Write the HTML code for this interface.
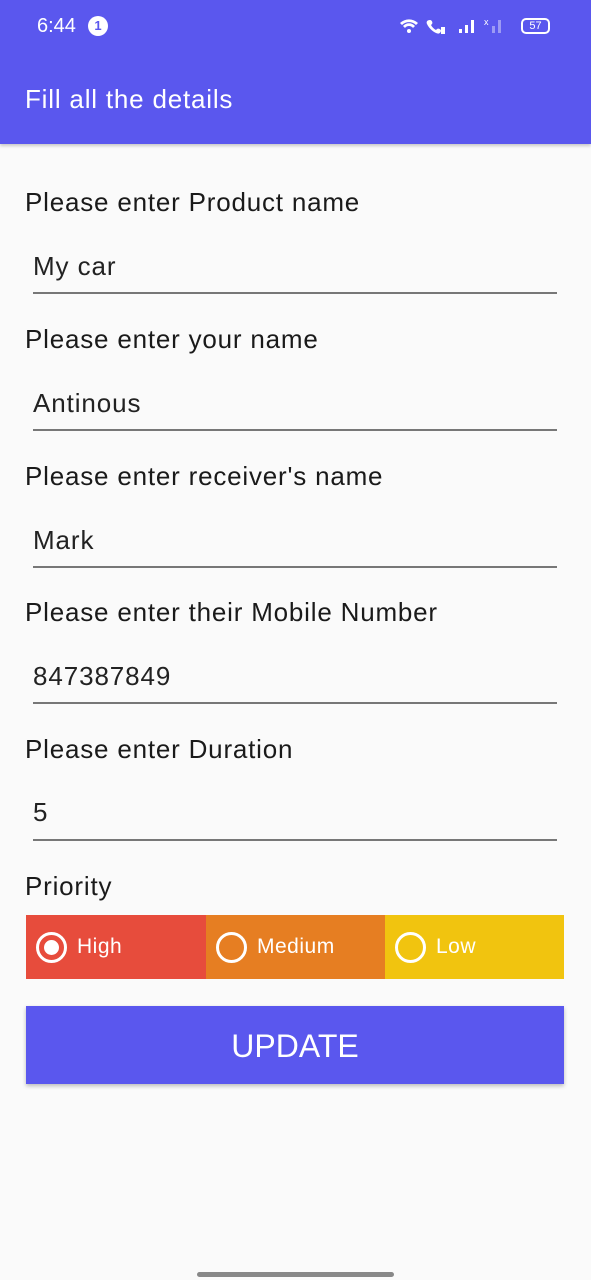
<!DOCTYPE html>
<html><head><meta charset="utf-8"><style>
*{margin:0;padding:0;box-sizing:border-box}
body{width:591px;height:1280px;background:#fafafa;font-family:"Liberation Sans",sans-serif;position:relative;overflow:hidden;color:#1a1a1a}
.bar{position:absolute;left:0;top:0;width:591px;height:144px;background:#5a57ee;box-shadow:0 2px 3px rgba(0,0,0,.2)}
.t{position:absolute;white-space:nowrap;line-height:1}
.lab{left:25px;font-size:26px;letter-spacing:0.8px;color:#1a1a1a}
.inp{left:33px;font-size:26px;letter-spacing:0.9px;color:#222}
.ul{position:absolute;left:33px;width:524px;height:1.5px;background:#777}
.seg{position:absolute;top:915px;height:64px;width:180px}
.rad{position:absolute;left:10px;top:17px;width:31px;height:31px;border:3px solid #fff;border-radius:50%}
.rl{position:absolute;left:51px;top:21px;color:#fff;font-size:21px;letter-spacing:0.5px}
</style></head><body>
<div class="bar">
<div class="t" style="left:37px;top:16px;font-size:20px;color:#fff">6:44</div>
<div style="position:absolute;left:88px;top:16px;width:20px;height:20px;border-radius:50%;background:#fff;color:#5a57ee;font-size:13px;font-weight:bold;text-align:center;line-height:20px">1</div>
<svg style="position:absolute;left:398px;top:14px" width="120" height="24" viewBox="0 0 120 24" fill="#fff">
<path d="M2 9a13 13 0 0 1 18 0l-2 2a10 10 0 0 0-14 0z M5 12a8 8 0 0 1 12 0l-2 2a5 5 0 0 0-8 0z"/><circle cx="11" cy="17" r="2"/>
<path d="M32 6c2 0 3 3 2 4l-1 1c1 2 3 4 5 5l1-1c1-1 4 0 4 2-1 3-3 3-5 2-4-2-7-5-9-9-1-2 0-4 3-4z"/><rect x="43" y="13" width="4" height="7"/>
<rect x="61" y="15" width="3" height="4"/><rect x="67" y="11" width="3" height="8"/><rect x="73" y="6" width="3" height="13"/>
<g opacity=".4"><rect x="94" y="12" width="3" height="7"/><rect x="100" y="6" width="3" height="13"/></g>
<text x="86" y="11" font-size="9" font-family="Liberation Sans">x</text>
</svg>
<div style="position:absolute;left:521px;top:18px;width:29px;height:16px;border:2px solid #fff;border-radius:5px;color:#fff;font-size:11px;text-align:center;line-height:12px">57</div>
<div class="t" style="left:25px;top:86px;font-size:26px;letter-spacing:0.8px;color:#fff">Fill all the details</div>
</div>
<div class="t lab" style="top:189px">Please enter Product name</div>
<div class="t inp" style="top:253px">My car</div>
<div class="ul" style="top:292px"></div>
<div class="t lab" style="top:326px">Please enter your name</div>
<div class="t inp" style="top:390px">Antinous</div>
<div class="ul" style="top:429px"></div>
<div class="t lab" style="top:463px">Please enter receiver's name</div>
<div class="t inp" style="top:527px">Mark</div>
<div class="ul" style="top:566px"></div>
<div class="t lab" style="top:599px">Please enter their Mobile Number</div>
<div class="t inp" style="top:663px">847387849</div>
<div class="ul" style="top:702px"></div>
<div class="t lab" style="top:736px">Please enter Duration</div>
<div class="t inp" style="top:799px">5</div>
<div class="ul" style="top:839px"></div>
<div class="t lab" style="top:873px">Priority</div>
<div class="seg" style="left:26px;background:#e74c3c"><div class="rad"><div style="position:absolute;left:5px;top:5px;width:15px;height:15px;border-radius:50%;background:#fff"></div></div><div class="t rl">High</div></div>
<div class="seg" style="left:206px;width:179px;background:#e67e22"><div class="rad"></div><div class="t rl">Medium</div></div>
<div class="seg" style="left:385px;width:179px;background:#f1c40f"><div class="rad"></div><div class="t rl">Low</div></div>
<div style="position:absolute;left:26px;top:1006px;width:538px;height:78px;background:#5a57ee;box-shadow:0 2px 4px rgba(0,0,0,.25);color:#fff;font-size:32px;text-align:center;line-height:80px">UPDATE</div>
<div style="position:absolute;left:197px;top:1272px;width:197px;height:5px;border-radius:3px;background:#888"></div>
</body></html>
